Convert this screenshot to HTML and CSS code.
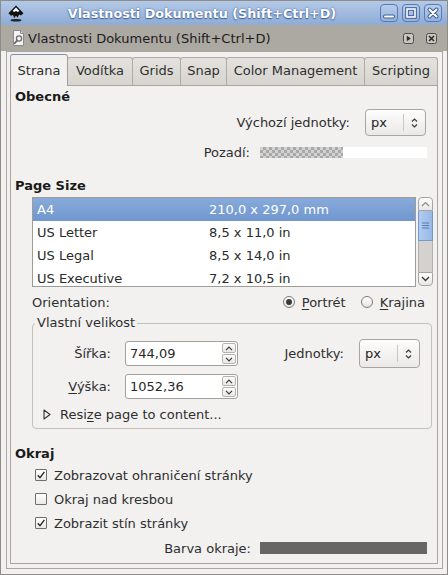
FILE: index.html
```html
<!DOCTYPE html>
<html lang="cs">
<head>
<meta charset="utf-8">
<title>Vlastnosti Dokumentu</title>
<link rel="stylesheet" href="styles.css">
</head>
<body>
<div class="window">
  <div class="titlebar">
    <svg class="app-icon" width="16" height="17" viewBox="0 0 16 17">
      <path d="M8 0.5 L15.5 8.3 L13 10.6 L11.2 9.6 L9.6 12.4 L8 10.8 L6.2 13 L5 10 L3 10.8 L0.5 8.3 Z" fill="#111"/>
      <path d="M8 2.6 L11.4 6.1 L9.8 6.9 L8 5.9 L6.2 6.9 L4.6 6.1 Z" fill="#fff"/>
      <ellipse cx="8" cy="15.3" rx="5.5" ry="1.3" fill="#222"/>
    </svg>
    <div class="title">Vlastnosti Dokumentu (Shift+Ctrl+D)</div>
    <div class="wbtns">
      <span class="wbtn"><svg width="18" height="18" viewBox="0 0 18 18"><path d="M5 12.5 H13" stroke="#3d5e93" stroke-width="4" stroke-linecap="round"/><path d="M5 12.5 H13" stroke="#fff" stroke-width="2" stroke-linecap="round"/></svg></span>
      <span class="wbtn"><svg width="18" height="18" viewBox="0 0 18 18"><rect x="5" y="5" width="8" height="8" fill="none" stroke="#3d5e93" stroke-width="3.6"/><rect x="5" y="5" width="8" height="8" fill="none" stroke="#fff" stroke-width="1.6"/></svg></span>
      <span class="wbtn"><svg width="18" height="18" viewBox="0 0 18 18"><path d="M5.5 5.5 L12.5 12.5 M12.5 5.5 L5.5 12.5" stroke="#3d5e93" stroke-width="4" stroke-linecap="round"/><path d="M5.5 5.5 L12.5 12.5 M12.5 5.5 L5.5 12.5" stroke="#fff" stroke-width="2" stroke-linecap="round"/></svg></span>
    </div>
  </div>

  <div class="dockbar">
    <svg class="dock-icon" width="13" height="16" viewBox="0 0 13 16">
      <path d="M1.5 0.5 H8.5 L11.5 3.5 V15.5 H1.5 Z" fill="#f4f4f4" stroke="#8a8a8a"/>
      <path d="M8.5 0.5 V3.5 H11.5" fill="#ddd" stroke="#8a8a8a"/>
      <circle cx="7" cy="8.5" r="2.6" fill="none" stroke="#6b6b6b" stroke-width="1.3"/>
      <path d="M5.2 10.4 L2.8 13.2" stroke="#6b6b6b" stroke-width="1.8" stroke-linecap="round"/>
    </svg>
    <div class="dock-title">Vlastnosti Dokumentu (Shift+Ctrl+D)</div>
    <div class="dock-btns">
      <span class="dbtn"><svg width="11" height="11" viewBox="0 0 11 11"><rect x="0.5" y="0.5" width="10" height="10" rx="2" fill="#c9c6c0" stroke="#4a4a4a"/><path d="M3.8 2.8 L7.8 5.5 L3.8 8.2 Z" fill="#2a2a2a"/></svg></span>
      <span class="dbtn"><svg width="11" height="11" viewBox="0 0 11 11"><rect x="0.5" y="0.5" width="10" height="10" rx="2" fill="#c9c6c0" stroke="#4a4a4a"/><path d="M3 3 L8 8 M8 3 L3 8" stroke="#2a2a2a" stroke-width="1.6"/></svg></span>
    </div>
  </div>

  <div class="frame">
    <div class="tabs">
      <div class="tab active t1">Strana</div>
      <div class="tab t2">Vodítka</div>
      <div class="tab t3">Grids</div>
      <div class="tab t4">Snap</div>
      <div class="tab t5">Color Management</div>
      <div class="tab t6">Scripting</div>
    </div>

    <div class="panel">
      <div class="sec sec-obecne">Obecné</div>

      <div class="row-units">
        <span>Výchozí jednotky:</span>
        <div class="combo">
          <span class="combo-val">px</span>
          <span class="combo-sep"></span>
          <span class="combo-chev"><svg width="7" height="12" viewBox="0 0 7 12"><path d="M1 4.5 L3.5 2 L6 4.5 M1 7.5 L3.5 10 L6 7.5" fill="none" stroke="#3a3a3a" stroke-width="1.2"/></svg></span>
        </div>
      </div>

      <div class="row-bg">
        <span>Pozadí:</span>
        <div class="swatch"><span class="checker"></span><span class="swatch-white"></span></div>
      </div>

      <div class="sec sec-pagesize">Page Size</div>

      <div class="list-row">
        <div class="list">
          <div class="item sel"><span class="iname">A4</span><span>210,0 x 297,0 mm</span></div>
          <div class="item"><span class="iname">US Letter</span><span>8,5 x 11,0 in</span></div>
          <div class="item"><span class="iname">US Legal</span><span>8,5 x 14,0 in</span></div>
          <div class="item"><span class="iname">US Executive</span><span>7,2 x 10,5 in</span></div>
        </div>
        <div class="sb">
          <div class="sb-btn up"><svg width="9" height="6" viewBox="0 0 9 6"><path d="M1 5 L4.5 1.5 L8 5" fill="none" stroke="#8a8a8a" stroke-width="1.2"/></svg></div>
          <div class="sb-thumb"><svg width="7" height="7" viewBox="0 0 7 7"><path d="M0 1 H7 M0 3.5 H7 M0 6 H7" stroke="#5b7db3" stroke-width="1"/></svg></div>
          <div class="sb-trough"></div>
          <div class="sb-btn down"><svg width="9" height="6" viewBox="0 0 9 6"><path d="M1 1 L4.5 4.5 L8 1" fill="none" stroke="#3a3a3a" stroke-width="1.4"/></svg></div>
        </div>
      </div>

      <div class="row-orient">
        <span>Orientation:</span>
        <div class="radios">
          <span class="radio"><span class="rbox on"></span><span><u>P</u>ortrét</span></span>
          <span class="radio"><span class="rbox"></span><span><u>K</u>rajina</span></span>
        </div>
      </div>

      <fieldset class="custom">
        <legend>Vlastní velikost</legend>
        <div class="frow frow-first">
          <span class="flabel">Šířka:</span>
          <div class="spin">
            <span class="spin-val">744,09</span>
            <span class="spin-arrows">
              <span class="spin-btn"><svg width="8" height="5" viewBox="0 0 8 5"><path d="M1 4.2 L4 1.2 L7 4.2" fill="none" stroke="#3a3a3a" stroke-width="1.2"/></svg></span>
              <span class="spin-btn"><svg width="8" height="5" viewBox="0 0 8 5"><path d="M1 0.8 L4 3.8 L7 0.8" fill="none" stroke="#3a3a3a" stroke-width="1.2"/></svg></span>
            </span>
          </div>
          <div class="units">
            <span>Jednotky:</span>
            <div class="combo tall">
              <span class="combo-val">px</span>
              <span class="combo-sep"></span>
              <span class="combo-chev"><svg width="7" height="12" viewBox="0 0 7 12"><path d="M1 4.5 L3.5 2 L6 4.5 M1 7.5 L3.5 10 L6 7.5" fill="none" stroke="#3a3a3a" stroke-width="1.2"/></svg></span>
            </div>
          </div>
        </div>
        <div class="frow frow-second">
          <span class="flabel"><u>V</u>ýška:</span>
          <div class="spin">
            <span class="spin-val">1052,36</span>
            <span class="spin-arrows">
              <span class="spin-btn"><svg width="8" height="5" viewBox="0 0 8 5"><path d="M1 4.2 L4 1.2 L7 4.2" fill="none" stroke="#3a3a3a" stroke-width="1.2"/></svg></span>
              <span class="spin-btn"><svg width="8" height="5" viewBox="0 0 8 5"><path d="M1 0.8 L4 3.8 L7 0.8" fill="none" stroke="#3a3a3a" stroke-width="1.2"/></svg></span>
            </span>
          </div>
        </div>
        <div class="expander">
          <svg width="8" height="11" viewBox="0 0 8 11"><path d="M1 1 L7 5.5 L1 10 Z" fill="none" stroke="#333" stroke-width="1.1" stroke-linejoin="round"/></svg>
          <span>Resi<u>z</u>e page to content...</span>
        </div>
      </fieldset>

      <div class="sec sec-okraj">Okraj</div>

      <div class="check"><span class="cbox"><svg width="10" height="10" viewBox="0 0 10 10"><path d="M1.8 5.2 L4 7.6 L8.4 1.8" fill="none" stroke="#2a2a2a" stroke-width="1.4"/></svg></span><span>Zobrazovat ohraničení stránky</span></div>
      <div class="check"><span class="cbox"></span><span>Okraj nad kresbou</span></div>
      <div class="check"><span class="cbox"><svg width="10" height="10" viewBox="0 0 10 10"><path d="M1.8 5.2 L4 7.6 L8.4 1.8" fill="none" stroke="#2a2a2a" stroke-width="1.4"/></svg></span><span>Zobrazit stín stránky</span></div>

      <div class="row-barva">
        <span>Barva okraje:</span>
        <span class="bar"></span>
      </div>
    </div>
  </div>
</div>
</body>
</html>
```

FILE: styles.css
```css
* { box-sizing: border-box; }

html, body {
  margin: 0;
  padding: 0;
}

body {
  width: 448px;
  height: 575px;
  overflow: hidden;
  font-family: "DejaVu Sans", sans-serif;
  font-size: 13px;
  color: #2e2e2e;
  background: #f2f1f0;
}

u { text-decoration: underline; text-underline-offset: 2px; }

.window {
  width: 448px;
  height: 575px;
  display: flex;
  flex-direction: column;
  border: 1px solid #8e8c88;
  background: #f2f1f0;
}

/* ---------- title bar ---------- */
.titlebar {
  flex: none;
  height: 24px;
  display: flex;
  align-items: center;
  padding: 0 5px 0 7px;
  background: linear-gradient(#b4c9e7, #8eabd6);
}

.app-icon { flex: none; }

.title {
  flex: 1;
  text-align: center;
  color: #fff;
  font-weight: bold;
  font-size: 12.75px;
  text-shadow: 0 0 2px #3f6298, 0 1px 1px #3f6298;
}

.wbtns {
  display: flex;
  gap: 4px;
}

.wbtn {
  width: 18px;
  height: 18px;
  border: 1px solid #587bb1;
  border-radius: 4px;
  background: linear-gradient(#b9cdeb, #93b1dc);
  display: flex;
  align-items: center;
  justify-content: center;
  overflow: hidden;
}

.wbtn svg { flex: none; }

/* ---------- dock bar ---------- */
.dockbar {
  flex: none;
  height: 26px;
  display: flex;
  align-items: center;
  padding: 0 10px 0 11px;
  background: #aca8a2;
}

.dock-icon { flex: none; }

.dock-title {
  flex: 1;
  margin-left: 3px;
  color: #1c1c1c;
}

.dock-btns {
  display: flex;
  gap: 12px;
}

.dbtn { display: flex; }

/* ---------- frame ---------- */
.frame {
  flex: 1;
  display: flex;
  flex-direction: column;
  margin: 0 4px 5px 5px;
  border: 1px solid #aaa7a2;
  padding: 2px 4px 4px 3px;
}

.tabs {
  flex: none;
  height: 32px;
  margin-bottom: -1px;
  display: flex;
  align-items: flex-end;
  position: relative;
  z-index: 1;
}

.tab {
  height: 28px;
  margin-bottom: 1px;
  margin-left: -1px;
  line-height: 26px;
  text-align: center;
  white-space: nowrap;
  border: 1px solid #aeaba6;
  border-bottom: none;
  border-radius: 3px 3px 0 0;
  background: linear-gradient(#e4e2de, #d7d4cf);
  color: #2e2e2e;
}

.tab.active {
  height: 32px;
  margin-bottom: 0;
  padding-top: 3px;
  line-height: 26px;
  background: #f2f1f0;
  border-color: #a19e99;
  border-top-color: #7d92b0;
  position: relative;
  z-index: 2;
}

.t1 { width: 58px; margin-left: 0; }
.t2 { width: 66px; }
.t3 { width: 49px; }
.t4 { width: 47px; }
.t5 { width: 139px; }
.t6 { width: 74px; }

.panel {
  flex: 1;
  display: flex;
  flex-direction: column;
  border: 1px solid #a8a5a0;
  background: #f2f1f0;
}

.sec {
  padding-left: 4px;
  font-weight: bold;
  color: #1a1a1a;
}

.sec-obecne { height: 22px; line-height: 22px; }
.sec-pagesize { margin-top: 18px; height: 18px; line-height: 18px; }
.sec-okraj { margin-top: 16px; height: 18px; line-height: 18px; }

/* ---------- combo ---------- */
.combo {
  width: 61px;
  height: 27px;
  display: flex;
  align-items: center;
  border: 1px solid #a9a6a1;
  border-radius: 4px;
  background: linear-gradient(#fdfdfd, #ebe9e7);
  color: #222;
}

.combo.tall { height: 29px; }

.combo-val {
  width: 37px;
  padding-left: 5px;
}

.combo-sep {
  width: 1px;
  height: 17px;
  background: #cbc8c4;
}

.combo-chev {
  flex: 1;
  display: flex;
  justify-content: center;
}

.row-units {
  margin-top: 1px;
  height: 27px;
  display: flex;
  align-items: center;
  justify-content: flex-end;
  gap: 15px;
  padding-right: 11px;
}

.row-bg {
  margin-top: 9px;
  height: 14px;
  display: flex;
  align-items: center;
  justify-content: flex-end;
  gap: 10px;
  padding-right: 10px;
}

.swatch {
  width: 167px;
  height: 11px;
  display: flex;
}

.checker {
  width: 83px;
  background: repeating-conic-gradient(#a9a9a9 0 25%, #d2d2d2 0 50%) 0 0 / 6px 6px;
}

.swatch-white {
  flex: 1;
  background: #fff;
}

/* ---------- list ---------- */
.list-row {
  margin-top: 2px;
  height: 90px;
  display: flex;
  gap: 2px;
  padding-left: 21px;
}

.list {
  width: 384px;
  border: 1px solid #9f9c97;
  background: #fff;
  overflow: hidden;
}

.item {
  height: 23px;
  flex: none;
  display: flex;
  align-items: center;
  padding-left: 4px;
  color: #2a2a2a;
}

.item.sel {
  background: linear-gradient(#88aadb, #7097ce);
  color: #fff;
}

.iname { width: 172px; }

.sb {
  width: 15px;
  height: 89px;
  display: flex;
  flex-direction: column;
}

.sb-btn {
  height: 14px;
  flex: none;
  display: flex;
  align-items: center;
  justify-content: center;
  border: 1px solid #a8a5a0;
  background: linear-gradient(#fcfcfc, #e8e7e5);
}

.sb-btn.up { border-radius: 4px 4px 0 0; }
.sb-btn.down { border-radius: 0 0 4px 4px; }

.sb-thumb {
  height: 30px;
  flex: none;
  display: flex;
  align-items: center;
  justify-content: center;
  border: 1px solid #7398cc;
  border-top: none;
  background: linear-gradient(90deg, #b1ccf0, #98b8e6);
}

.sb-trough {
  flex: 1;
  background: #d4d2ce;
  border-left: 1px solid #b3b0ab;
  border-right: 1px solid #b3b0ab;
}

/* ---------- orientation ---------- */
.row-orient {
  margin-top: 4px;
  height: 22px;
  display: flex;
  align-items: center;
  justify-content: space-between;
  padding: 0 12px 0 21px;
}

.radios {
  display: flex;
  gap: 15px;
}

.radio {
  display: flex;
  align-items: center;
  gap: 7px;
}

.rbox {
  width: 12px;
  height: 12px;
  border: 1px solid #7a7a7a;
  border-radius: 50%;
  background: linear-gradient(#ffffff, #e6e5e3);
  display: flex;
  align-items: center;
  justify-content: center;
}

.rbox.on::after {
  content: "";
  width: 6px;
  height: 6px;
  border-radius: 50%;
  background: #3a3a3a;
}

/* ---------- custom size frame ---------- */
.custom {
  margin: 3px 5px 0 21px;
  padding: 0 11px 5px 0;
  border: 1px solid #c3c0bb;
  border-radius: 4px;
  min-width: 0;
}

.custom legend {
  margin-left: 2px;
  padding: 0 2px;
  line-height: 14px;
}

.frow {
  height: 25px;
  display: flex;
  align-items: center;
}

.frow-first { margin-top: 11px; }
.frow-second { margin-top: 8px; }

.flabel {
  width: 78px;
  text-align: right;
  margin-right: 14px;
}

.spin {
  width: 113px;
  height: 25px;
  display: flex;
  border: 1px solid #a3a09b;
  border-radius: 3px;
  background: #fff;
}

.spin-val {
  flex: 1;
  padding-left: 4px;
  line-height: 23px;
  color: #2a2a2a;
}

.spin-arrows {
  width: 15px;
  display: flex;
  flex-direction: column;
  padding: 1px 1px 1px 0;
  gap: 1px;
}

.spin-btn {
  flex: 1;
  display: flex;
  align-items: center;
  justify-content: center;
  border: 1px solid #b7b4af;
  border-radius: 2px;
  background: linear-gradient(#fcfcfc, #e9e8e6);
}

.units {
  margin-left: auto;
  display: flex;
  align-items: center;
  gap: 15px;
}

.expander {
  margin-top: 6px;
  height: 18px;
  display: flex;
  align-items: center;
  gap: 9px;
  padding-left: 10px;
}

/* ---------- checkboxes ---------- */
.check {
  height: 24px;
  display: flex;
  align-items: center;
  gap: 7px;
  padding-left: 24px;
}

.cbox {
  width: 12px;
  height: 12px;
  border: 1px solid #6e6e6e;
  border-radius: 1px;
  background: linear-gradient(#ffffff, #e9e8e6);
  display: flex;
  align-items: center;
  justify-content: center;
}

.row-barva {
  margin-top: 5px;
  height: 16px;
  display: flex;
  align-items: center;
  justify-content: flex-end;
  gap: 9px;
  padding-right: 10px;
}

.bar {
  width: 167px;
  height: 12px;
  background: #666;
}
```
